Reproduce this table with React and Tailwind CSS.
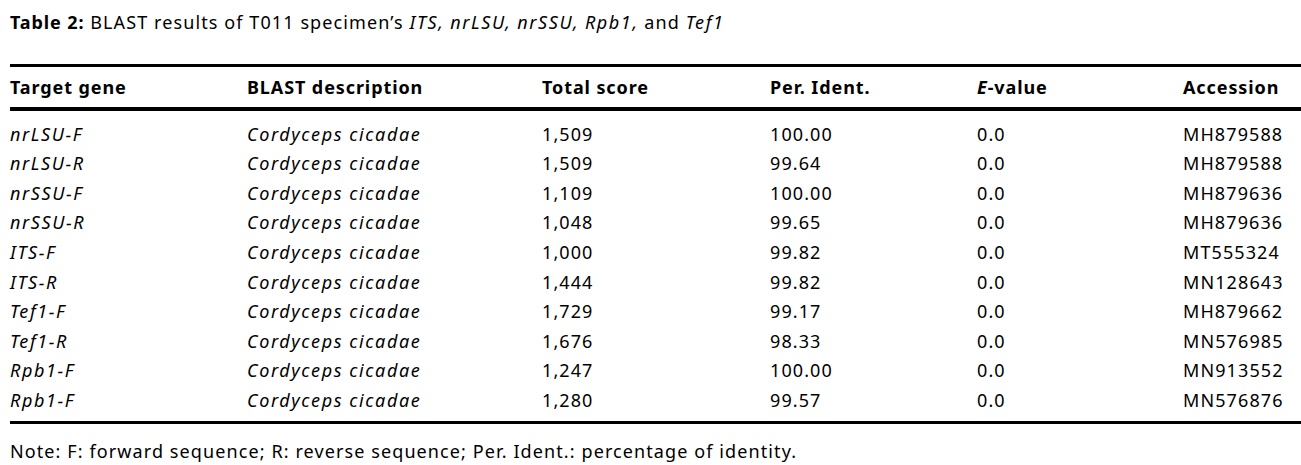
const rows = [
  ['nrLSU-F', '1,509', '100.00', '0.0', 'MH879588'],
  ['nrLSU-R', '1,509', '99.64', '0.0', 'MH879588'],
  ['nrSSU-F', '1,109', '100.00', '0.0', 'MH879636'],
  ['nrSSU-R', '1,048', '99.65', '0.0', 'MH879636'],
  ['ITS-F', '1,000', '99.82', '0.0', 'MT555324'],
  ['ITS-R', '1,444', '99.82', '0.0', 'MN128643'],
  ['Tef1-F', '1,729', '99.17', '0.0', 'MH879662'],
  ['Tef1-R', '1,676', '98.33', '0.0', 'MN576985'],
  ['Rpb1-F', '1,247', '100.00', '0.0', 'MN913552'],
  ['Rpb1-F', '1,280', '99.57', '0.0', 'MN576876'],
]

const cols = 'grid grid-cols-[237px_295px_228px_207px_206px_117px]'

export default function App() {
  return (
    <div
      className="w-[1301px] h-[465px] bg-white text-black pl-[10px] pt-[12px] text-[18px] leading-[20px] tracking-[1.1px] whitespace-nowrap"
      style={{ fontFamily: '"Noto Sans", sans-serif' }}
    >
      <div>
        <span className="font-bold tracking-[0.9px]">Table 2:</span> BLAST results of T011 specimen’s{' '}
        <i className="tracking-[1.6px]">ITS,</i> <i className="tracking-[1.6px]">nrLSU,</i>{' '}
        <i className="tracking-[1.6px]">nrSSU,</i> <i className="tracking-[1.6px]">Rpb1,</i> and{' '}
        <i className="tracking-[1.6px]">Tef1</i>
      </div>

      <div className="mt-[32px] border-t-[3px] border-black">
        <div className={`${cols} h-[40px] items-center font-bold tracking-[0.9px]`}>
          <div>Target gene</div>
          <div>BLAST description</div>
          <div>Total score</div>
          <div>Per. Ident.</div>
          <div>
            <i>E</i>-value
          </div>
          <div>Accession</div>
        </div>
        <div className="border-t-[4px] border-black pt-[8px] pb-[7px] border-b-[3px]">
          {rows.map((r, i) => (
            <div key={i} className={`${cols} h-[29.56px] items-center`}>
              <div className="italic tracking-[1.6px]">{r[0]}</div>
              <div className="italic tracking-[1.6px]">Cordyceps cicadae</div>
              <div>{r[1]}</div>
              <div>{r[2]}</div>
              <div>{r[3]}</div>
              <div>{r[4]}</div>
            </div>
          ))}
        </div>
      </div>

      <div className="mt-[17px]">
        Note: F: forward sequence; R: reverse sequence; Per. Ident.: percentage of identity.
      </div>
    </div>
  )
}
